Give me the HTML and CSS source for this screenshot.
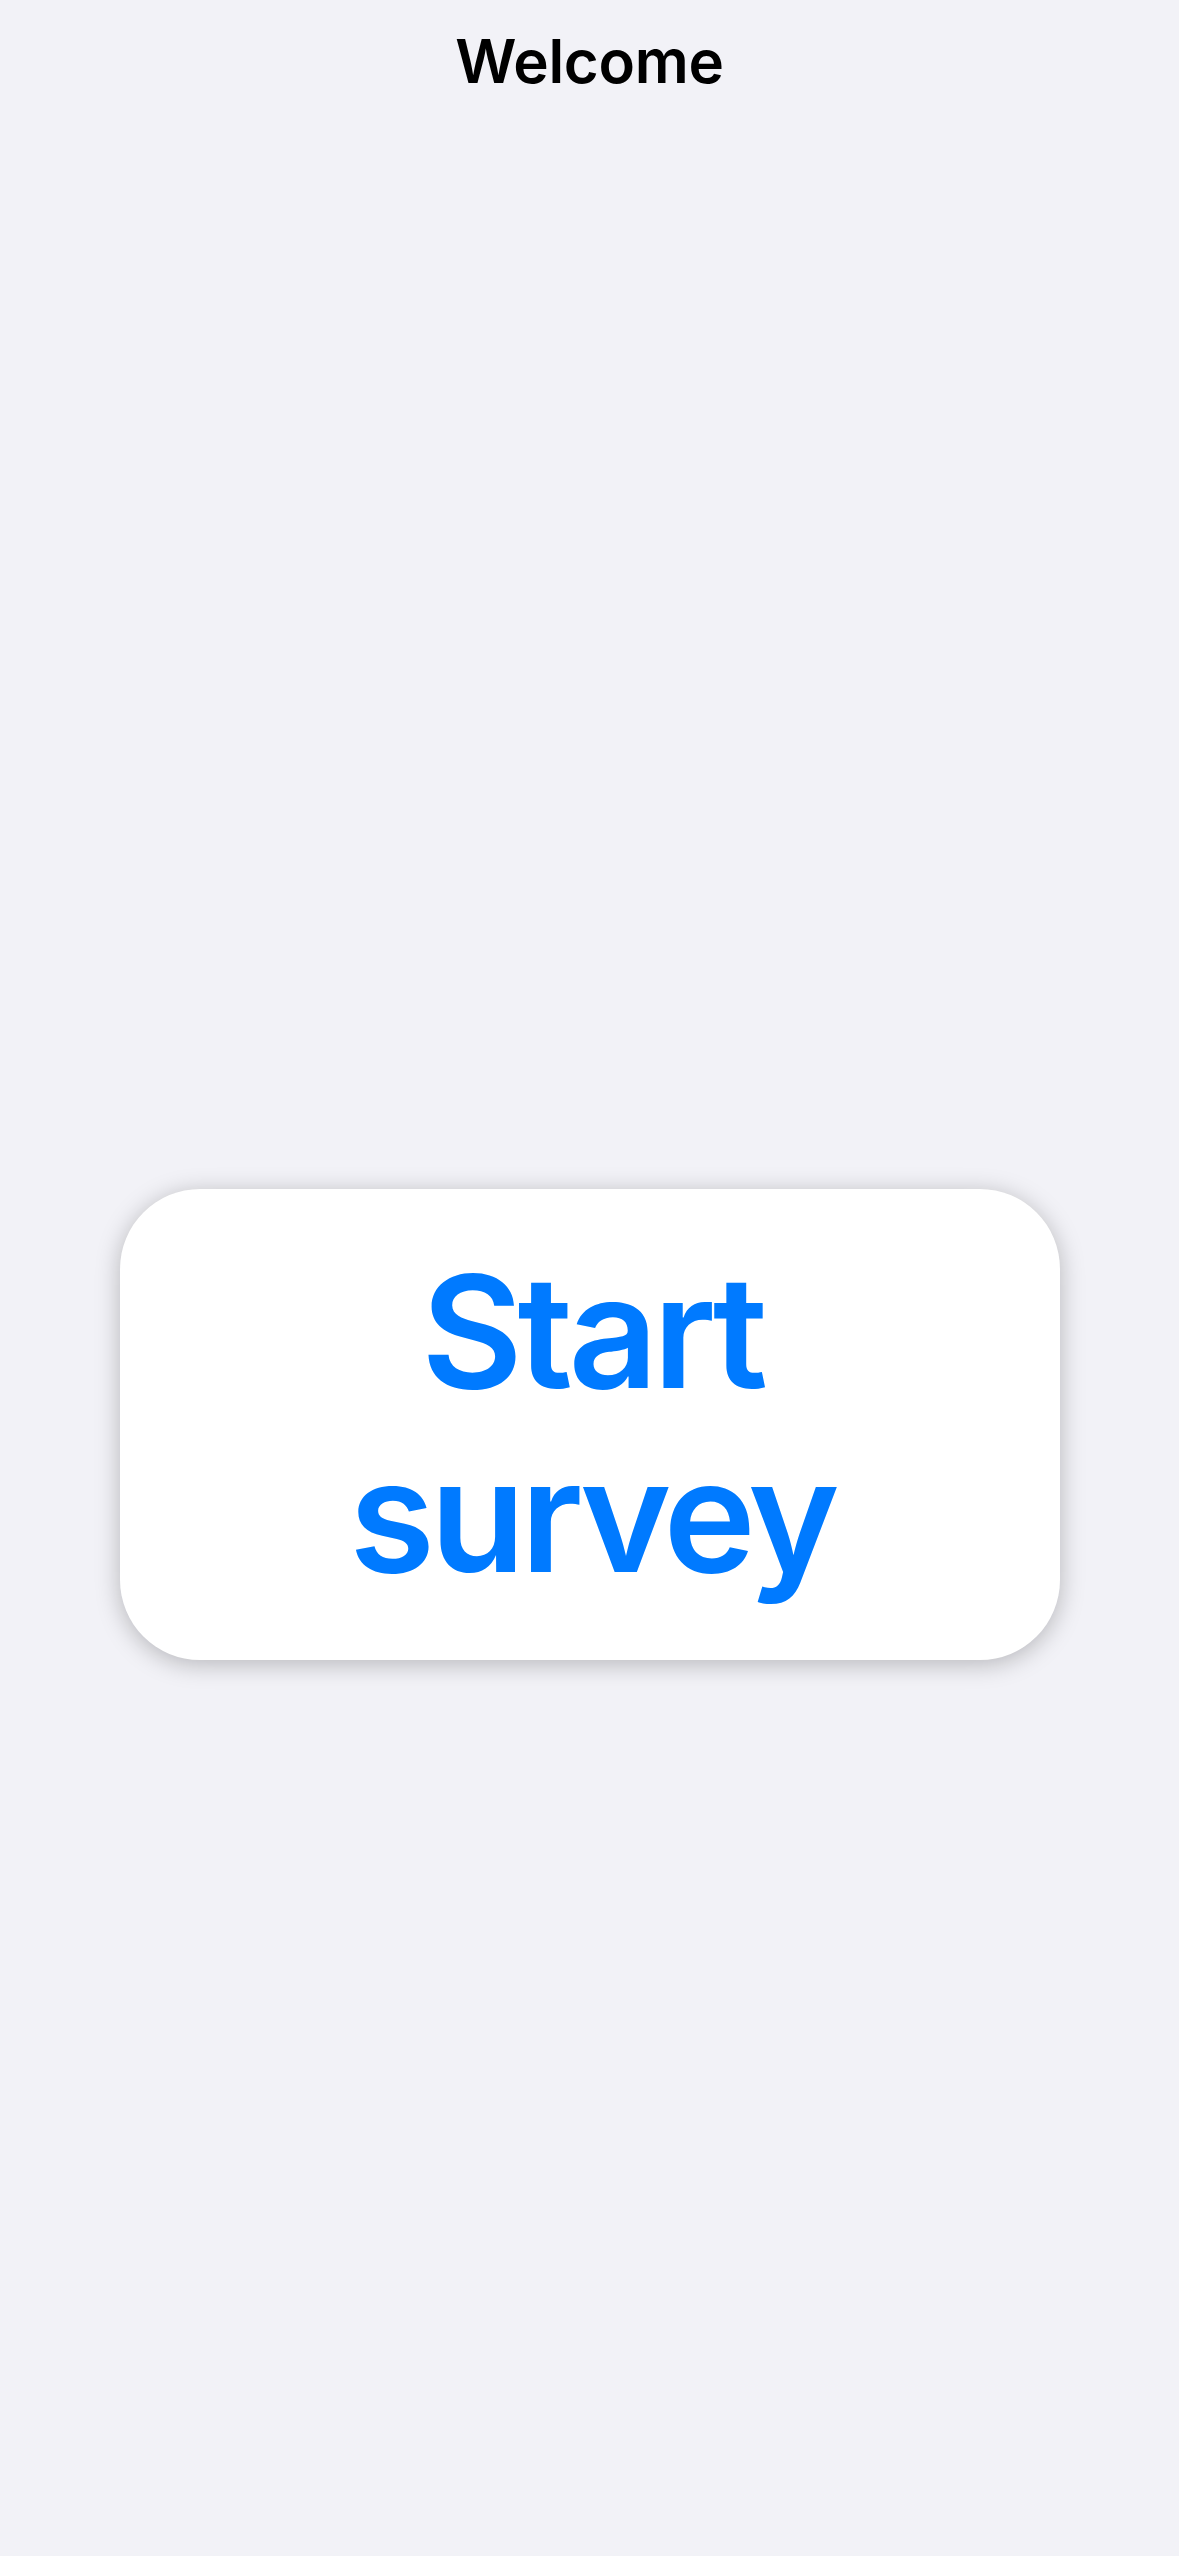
FILE: index.html
```html
<!DOCTYPE html>
<html lang="en">
<head>
<meta charset="utf-8">
<title>Welcome</title>
<link rel="stylesheet" href="styles.css">
</head>
<body>
<div class="screen">
  <header class="nav">
    <h1 class="nav-title">Welcome</h1>
  </header>
  <main class="content">
    <button class="start-card" type="button">Start<br>survey</button>
  </main>
</div>
</body>
</html>
```

FILE: styles.css
```css
html, body {
  margin: 0;
  padding: 0;
  background: #f2f2f7;
}

.screen {
  width: 1179px;
  height: 2556px;
  display: flex;
  flex-direction: column;
  align-items: center;
  font-family: Inter, "Liberation Sans", sans-serif;
}

.nav {
  padding-top: 25px;
  display: flex;
  justify-content: center;
  width: 100%;
}

.nav-title {
  margin: 0;
  font-size: 60px;
  line-height: 72px;
  font-weight: 600;
  color: #000;
  letter-spacing: -0.3px;
}

.content {
  margin-top: 1092px;
  display: flex;
  justify-content: center;
  width: 100%;
}

.start-card {
  width: 940px;
  box-sizing: border-box;
  padding: 51px 0 52px 5px;
  border: none;
  border-radius: 80px;
  background: #ffffff;
  box-shadow: 0 4px 24px rgba(0, 0, 0, 0.25);
  color: #007aff;
  font-family: Inter, "Liberation Sans", sans-serif;
  font-size: 156px;
  line-height: 184px;
  font-weight: 600;
  letter-spacing: -5px;
  text-align: center;
  cursor: pointer;
}
```
